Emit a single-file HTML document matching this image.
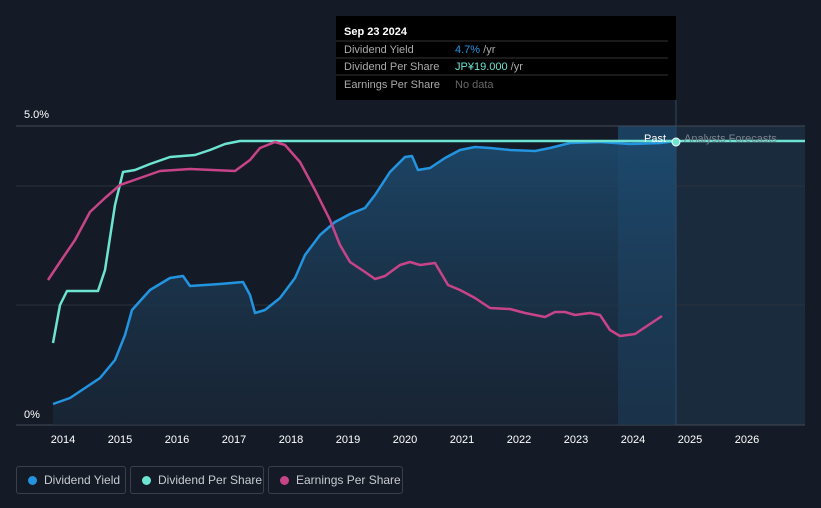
<!DOCTYPE html><html><head><style>
body{margin:0;background:#151b26;width:821px;height:508px;overflow:hidden;font-family:"Liberation Sans",sans-serif}
.lg{position:absolute;top:466px;height:28px;border:1px solid #3a404b;border-radius:3px;color:#c8cbd0;font-size:12px;line-height:26px;box-sizing:border-box;padding-left:27px;white-space:nowrap}
.lg i{position:absolute;left:11px;top:9px;width:9px;height:9px;border-radius:50%}
</style></head><body>
<svg width="821" height="508" style="position:absolute;left:0;top:0" font-family="Liberation Sans,sans-serif">
<defs><linearGradient id="g" x1="0" y1="0" x2="0" y2="1"><stop offset="0" stop-color="#1d4a6e" stop-opacity=".9"/><stop offset="1" stop-color="#1a2a3c" stop-opacity=".6"/></linearGradient></defs>
<rect x="618" y="126" width="58" height="299" fill="#1b3f5f"/>
<rect x="676" y="126" width="129" height="299" fill="#1a2b3d"/>
<line x1="16" y1="126" x2="805" y2="126" stroke="#454b55"/>
<line x1="16" y1="186" x2="805" y2="186" stroke="#2a303a"/>
<line x1="16" y1="305" x2="805" y2="305" stroke="#2a303a"/>
<line x1="16" y1="425" x2="805" y2="425" stroke="#454b55"/>
<path d="M53,404 L70,398 85,388 100,378 115,360 125,335 132,310 150,290 170,278 183,276 190,286 220,284 243,282 250,295 255,313 265,310 280,298 295,278 305,255 320,235 335,222 350,214 365,208 375,195 390,172 405,157 412,156 418,170 430,168 445,158 460,150 475,147 490,148 510,150 535,151 550,148 570,143 600,142 630,144 660,143 676,141 L676,425 L53,425Z" fill="url(#g)"/>
<path d="M53,404 L70,398 85,388 100,378 115,360 125,335 132,310 150,290 170,278 183,276 190,286 220,284 243,282 250,295 255,313 265,310 280,298 295,278 305,255 320,235 335,222 350,214 365,208 375,195 390,172 405,157 412,156 418,170 430,168 445,158 460,150 475,147 490,148 510,150 535,151 550,148 570,143 600,142 630,144 660,143 676,141" fill="none" stroke="#2394e0" stroke-width="2.5" stroke-linejoin="round"/>
<path d="M53,343 L60,305 67,291 98,291 105,270 115,205 123,172 135,170 150,164 170,157 195,155 210,150 225,144 240,141 805,141" fill="none" stroke="#6de4d2" stroke-width="2.5" stroke-linejoin="round"/>
<path d="M48,280 L60,262 75,240 90,212 105,198 120,185 140,178 160,171 190,169 235,171 250,160 260,148 275,142 285,145 300,162 315,190 330,220 340,245 350,262 365,272 375,279 385,276 400,265 410,262 420,265 435,263 448,285 460,290 475,298 490,308 510,309 525,313 545,317 555,312 565,312 575,315 590,313 600,315 610,330 620,336 635,334 650,324 662,316" fill="none" stroke="#c84488" stroke-width="2.5" stroke-linejoin="round"/>
<line x1="676" y1="100" x2="676" y2="425" stroke="#2a4a66"/>
<circle cx="676" cy="142" r="4" fill="#6de4d2" stroke="#fff" stroke-width="1"/>
<text x="644" y="142" fill="#fff" font-size="11">Past</text>
<text x="684" y="142" fill="#7d838c" font-size="11">Analysts Forecasts</text>
<text x="24" y="118" fill="#fff" font-size="11">5.0%</text>
<text x="24" y="418" fill="#fff" font-size="11">0%</text>
<g fill="#fff" font-size="11" text-anchor="middle">
<text x="63" y="443">2014</text><text x="120" y="443">2015</text><text x="177" y="443">2016</text><text x="234" y="443">2017</text><text x="291" y="443">2018</text><text x="348" y="443">2019</text><text x="405" y="443">2020</text><text x="462" y="443">2021</text><text x="519" y="443">2022</text><text x="576" y="443">2023</text><text x="633" y="443">2024</text><text x="690" y="443">2025</text><text x="747" y="443">2026</text></g>
<rect x="336" y="16" width="340" height="84" fill="#000"/>
<text x="344" y="35" fill="#fff" font-size="11" font-weight="bold">Sep 23 2024</text>
<line x1="336" y1="41" x2="668" y2="41" stroke="#333"/>
<text x="344" y="53" fill="#aaa" font-size="11">Dividend Yield</text><text x="455" y="53" font-size="11" fill="#2394e0">4.7% <tspan fill="#aaa">/yr</tspan></text>
<line x1="336" y1="58" x2="668" y2="58" stroke="#333"/>
<text x="344" y="70" fill="#aaa" font-size="11">Dividend Per Share</text><text x="455" y="70" font-size="11" fill="#6de4d2">JP¥19.000 <tspan fill="#aaa">/yr</tspan></text>
<line x1="336" y1="75" x2="668" y2="75" stroke="#333"/>
<text x="344" y="88" fill="#aaa" font-size="11">Earnings Per Share</text><text x="455" y="88" font-size="11" fill="#666">No data</text>
</svg>
<div class="lg" style="left:16px;width:110px"><i style="background:#2394e0"></i>Dividend Yield</div>
<div class="lg" style="left:130px;width:134px"><i style="background:#6de4d2"></i>Dividend Per Share</div>
<div class="lg" style="left:268px;width:135px"><i style="background:#c84488"></i>Earnings Per Share</div>
</body></html>
